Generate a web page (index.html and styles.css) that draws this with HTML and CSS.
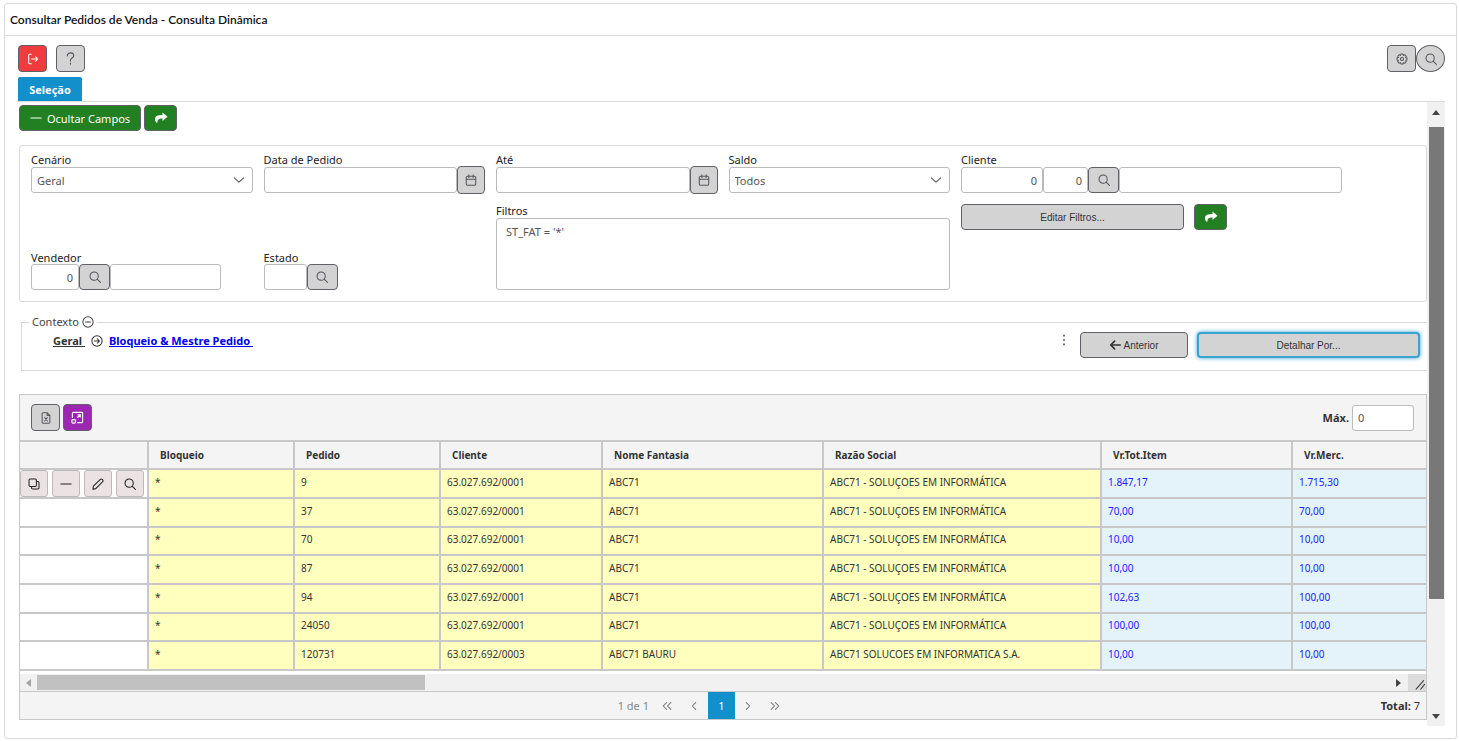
FILE: index.html
```html
<!DOCTYPE html>
<html lang="pt-BR">
<head>
  <meta charset="UTF-8" />
  <meta name="viewport" content="width=device-width, initial-scale=1.0"/>
  <title>Consultar Pedidos de Venda</title>
  <link rel="stylesheet" href="styles.css">
</head>
<body>
  <svg class="sprite" aria-hidden="true">
    <symbol id="i-exit" viewBox="0 0 14 14"><path d="M5 1.500H3a1 1 0 0 0-1 1v9a1 1 0 0 0 1 1h2M5 7h7.500M9.800 4.300 12.500 7 9.800 9.700"/></symbol>
    <symbol id="i-help" viewBox="0 0 14 14"><path d="M3.500 4.200C3.500 2.200 5 1 7 1s3.500 1.200 3.500 3.100C10.500 6.300 7 6.500 7 8.500v1.200M7 12v1"/></symbol>
    <symbol id="i-search" viewBox="0 0 14 14"><circle cx="6" cy="6" r="4.800"/><path d="m9.500 9.500 3.800 3.800"/></symbol>
    <symbol id="i-cog" viewBox="0 0 14 14"><path d="M5.700 1.200h2.600l.4 1.600 1.500-.8 1.800 1.800-.8 1.500 1.600.4v2.600l-1.600.4.8 1.500-1.800 1.800-1.500-.8-.4 1.600H5.700l-.4-1.600-1.500.8L2 10.200l.8-1.500-1.600-.4V5.700l1.600-.4L2 3.800 3.800 2l1.500.8z"/><circle cx="7" cy="7" r="1.800"/></symbol>
    <symbol id="i-minus" viewBox="0 0 14 14"><path d="M1 7h12"/></symbol>
    <symbol id="i-share" viewBox="0 0 14 14"><path class="solid" d="M8.500 1.500 13.500 5.800 8.500 10V7.500C5 7.400 3.200 8.500 3.300 12.300 1.500 11 .8 9.500 1 7.800 1.300 5 4 4 8.500 4z"/></symbol>
    <symbol id="i-calendar" viewBox="0 0 14 14"><rect x="1.500" y="2.500" width="11" height="10.500" rx="1.200"/><path d="M1.500 6h11M4.500 1v3M9.500 1v3"/></symbol>
    <symbol id="i-down" viewBox="0 0 14 14"><path d="m1.500 4.500 5.500 5 5.500-5"/></symbol>
    <symbol id="i-collapse" viewBox="0 0 14 14"><circle cx="7" cy="7" r="6"/><path d="M4 7h6"/></symbol>
    <symbol id="i-circle-right" viewBox="0 0 14 14"><circle cx="7" cy="7" r="6"/><path d="M4 7h6M7.500 4.500 10 7 7.500 9.500"/></symbol>
    <symbol id="i-left" viewBox="0 0 14 14"><path d="M13 7H2M6.500 2.500 2 7l4.500 4.500"/></symbol>
    <symbol id="i-dots" viewBox="0 0 14 14"><path class="solid" d="M6 1h2v2H6zM6 6h2v2H6zM6 11h2v2H6z"/></symbol>
    <symbol id="i-excel" viewBox="0 0 14 14"><path d="M8.500 1H3.500a1 1 0 0 0-1 1v10a1 1 0 0 0 1 1h7a1 1 0 0 0 1-1V4zM8.300 1v3.200h3.200M5.500 6.500l3 4M8.500 6.500l-3 4"/></symbol>
    <symbol id="i-expand" viewBox="0 0 14 14"><path d="M1.500 7V2.500a1 1 0 0 1 1-1h9a1 1 0 0 1 1 1v9a1 1 0 0 1-1 1H7M7 7l3-3M7.500 4H10v2.500"/><rect x="1" y="9.300" width="3.700" height="3.700" rx="1"/></symbol>
    <symbol id="i-clone" viewBox="0 0 14 14"><rect x="1.200" y="1.200" width="8.600" height="8.600" rx="1.200"/><path d="M9.800 4.200h1.800a1.200 1.200 0 0 1 1.200 1.200v6.200a1.200 1.200 0 0 1-1.200 1.200H5.400a1.200 1.200 0 0 1-1.200-1.200V9.800"/></symbol>
    <symbol id="i-pencil" viewBox="0 0 14 14"><path d="m1 13 .6-3.400L9.800 1.500a1.400 1.400 0 0 1 2 0l.7.700a1.400 1.400 0 0 1 0 2L4.400 12.400z"/></symbol>
    <symbol id="i-prev" viewBox="0 0 14 14"><path d="M9 3 5 7l4 4"/></symbol>
    <symbol id="i-next" viewBox="0 0 14 14"><path d="m5 3 4 4-4 4"/></symbol>
    <symbol id="i-first" viewBox="0 0 14 14"><path d="M6.500 3l-4 4 4 4M11.500 3l-4 4 4 4"/></symbol>
    <symbol id="i-last" viewBox="0 0 14 14"><path d="m2.500 3 4 4-4 4M7.500 3l4 4-4 4"/></symbol>
  </svg>

  <main class="window">
    <header class="window-title">
      <h1>Consultar Pedidos de Venda - Consulta Dinâmica</h1>
    </header>

    <div class="window-body">
      <div class="toolbar">
        <button class="btn exit" aria-label="Sair"><svg><use href="#i-exit"/></svg></button>
        <button class="btn help" aria-label="Ajuda"><svg><use href="#i-help"/></svg></button>
        <button class="btn config" aria-label="Configurar"><svg><use href="#i-cog"/></svg></button>
        <button class="btn round" aria-label="Pesquisar"><svg><use href="#i-search"/></svg></button>
      </div>

      <nav class="tabs">
        <button class="tab">Seleção</button>
      </nav>

      <div class="scroll-area">
        <div class="content">
          <div class="actions">
            <button class="btn green hide-fields"><svg><use href="#i-minus"/></svg>Ocultar Campos</button>
            <button class="btn green share" aria-label="Executar"><svg><use href="#i-share"/></svg></button>
          </div>

          <form class="fields" onsubmit="return false">
            <div class="field">
              <label for="cenario">Cenário</label>
              <div class="select">
                <select id="cenario"><option>Geral</option></select>
                <svg><use href="#i-down"/></svg>
              </div>
            </div>
            <div class="field">
              <label for="dataPedido">Data de Pedido</label>
              <div class="group">
                <input class="grow" type="text" id="dataPedido">
                <button class="btn date" aria-label="Calendário"><svg><use href="#i-calendar"/></svg></button>
              </div>
            </div>
            <div class="field">
              <label for="ate">Até</label>
              <div class="group">
                <input class="grow" type="text" id="ate">
                <button class="btn date" aria-label="Calendário"><svg><use href="#i-calendar"/></svg></button>
              </div>
            </div>
            <div class="field">
              <label for="saldo">Saldo</label>
              <div class="select">
                <select id="saldo"><option>Todos</option></select>
                <svg><use href="#i-down"/></svg>
              </div>
            </div>
            <div class="field double">
              <label for="cliente">Cliente</label>
              <div class="group client">
                <input class="number code" type="text" id="cliente" value="0">
                <input class="number branch" type="text" aria-label="Filial" value="0">
                <button class="btn lookup" aria-label="Buscar cliente"><svg><use href="#i-search"/></svg></button>
                <input class="grow" type="text" aria-label="Nome do cliente">
              </div>
            </div>

            <div class="field">
              <label for="vendedor">Vendedor</label>
              <div class="group seller">
                <input class="number short" type="text" id="vendedor" value="0">
                <button class="btn lookup" aria-label="Buscar vendedor"><svg><use href="#i-search"/></svg></button>
                <input class="grow" type="text" aria-label="Nome do vendedor">
              </div>
            </div>
            <div class="field">
              <label for="estado">Estado</label>
              <div class="group">
                <input class="state" type="text" id="estado">
                <button class="btn lookup" aria-label="Buscar estado"><svg><use href="#i-search"/></svg></button>
              </div>
            </div>
            <div class="field double">
              <label for="filtros">Filtros</label>
              <textarea id="filtros">ST_FAT = '*'</textarea>
            </div>
            <div class="filter-actions double">
              <button class="btn wide">Editar Filtros...</button>
              <button class="btn green share" aria-label="Aplicar"><svg><use href="#i-share"/></svg></button>
            </div>
          </form>

          <fieldset class="context">
            <legend>Contexto <svg><use href="#i-collapse"/></svg></legend>
            <div class="context-row">
              <div class="crumbs">
                <a class="crumb" href="#">Geral&nbsp;</a>
                <svg><use href="#i-circle-right"/></svg>
                <a class="crumb current" href="#">Bloqueio &amp; Mestre Pedido&nbsp;</a>
              </div>
              <button class="menu" aria-label="Mais opções"><svg><use href="#i-dots"/></svg></button>
              <button class="btn back"><svg><use href="#i-left"/></svg>Anterior</button>
              <button class="btn wide focused">Detalhar Por...</button>
            </div>
          </fieldset>

          <section class="grid">
            <div class="grid-tools">
              <button class="btn file" aria-label="Exportar"><svg><use href="#i-excel"/></svg></button>
              <button class="btn purple" aria-label="Expandir"><svg><use href="#i-expand"/></svg></button>
              <label for="max">Máx.</label>
              <input type="text" id="max" value="0">
            </div>

            <table>
              <colgroup>
                <col class="c-tools"><col class="c-block"><col class="c-order"><col class="c-client">
                <col class="c-name"><col class="c-company"><col class="c-total"><col>
              </colgroup>
              <thead>
                <tr>
                  <th></th><th>Bloqueio</th><th>Pedido</th><th>Cliente</th><th>Nome Fantasia</th>
                  <th>Razão Social</th><th>Vr.Tot.Item</th><th>Vr.Merc.</th>
                </tr>
              </thead>
              <tbody>
                <tr>
                  <td class="row-tools">
                    <div>
                      <button aria-label="Copiar"><svg><use href="#i-clone"/></svg></button>
                      <button aria-label="Remover"><svg><use href="#i-minus"/></svg></button>
                      <button aria-label="Editar"><svg><use href="#i-pencil"/></svg></button>
                      <button aria-label="Consultar"><svg><use href="#i-search"/></svg></button>
                    </div>
                  </td>
                  <td>*</td><td>9</td><td>63.027.692/0001</td><td>ABC71</td><td>ABC71 - SOLUÇOES EM INFORMÁTICA</td>
                  <td class="value">1.847,17</td><td class="value">1.715,30</td>
                </tr>
                <tr>
                  <td class="row-tools"></td><td>*</td><td>37</td><td>63.027.692/0001</td><td>ABC71</td><td>ABC71 - SOLUÇOES EM INFORMÁTICA</td>
                  <td class="value">70,00</td><td class="value">70,00</td>
                </tr>
                <tr>
                  <td class="row-tools"></td><td>*</td><td>70</td><td>63.027.692/0001</td><td>ABC71</td><td>ABC71 - SOLUÇOES EM INFORMÁTICA</td>
                  <td class="value">10,00</td><td class="value">10,00</td>
                </tr>
                <tr>
                  <td class="row-tools"></td><td>*</td><td>87</td><td>63.027.692/0001</td><td>ABC71</td><td>ABC71 - SOLUÇOES EM INFORMÁTICA</td>
                  <td class="value">10,00</td><td class="value">10,00</td>
                </tr>
                <tr>
                  <td class="row-tools"></td><td>*</td><td>94</td><td>63.027.692/0001</td><td>ABC71</td><td>ABC71 - SOLUÇOES EM INFORMÁTICA</td>
                  <td class="value">102,63</td><td class="value">100,00</td>
                </tr>
                <tr>
                  <td class="row-tools"></td><td>*</td><td>24050</td><td>63.027.692/0001</td><td>ABC71</td><td>ABC71 - SOLUÇOES EM INFORMÁTICA</td>
                  <td class="value">100,00</td><td class="value">100,00</td>
                </tr>
                <tr>
                  <td class="row-tools"></td><td>*</td><td>120731</td><td>63.027.692/0003</td><td>ABC71 BAURU</td><td>ABC71 SOLUCOES EM INFORMATICA S.A.</td>
                  <td class="value">10,00</td><td class="value">10,00</td>
                </tr>
              </tbody>
            </table>

            <div class="hscroll">
              <span class="arrow left"></span>
              <div class="track"><div class="thumb"></div></div>
              <span class="arrow right"></span>
              <svg class="resizer" viewBox="0 0 18 18"><path d="M8 16l8-9M13 16l4-5"/></svg>
            </div>

            <footer class="pager">
              <div class="pages">
                <span>1 de 1</span>
                <button aria-label="Primeira"><svg><use href="#i-first"/></svg></button>
                <button aria-label="Anterior"><svg><use href="#i-prev"/></svg></button>
                <button class="active">1</button>
                <button aria-label="Próxima"><svg><use href="#i-next"/></svg></button>
                <button aria-label="Última"><svg><use href="#i-last"/></svg></button>
              </div>
              <div class="total"><b>Total:</b> 7</div>
            </footer>
          </section>
        </div>

        <div class="vscroll">
          <span class="arrow up"></span>
          <div class="track"><div class="thumb"></div></div>
          <span class="arrow down"></span>
        </div>
      </div>
    </div>
  </main>
</body>
</html>
```
FILE: styles.css
```css
* {
  box-sizing: border-box;
}
body {
  margin: 0;
  padding: 3px 2px 2px 4px;
  background: white;
  color: #333;
  font-family: "Noto Sans", sans-serif;
  font-size: 11px;
  line-height: 14px;
}
button, input, select, textarea {
  font-family: inherit;
  font-size: 11px;
  color: #555;
  margin: 0;
}
svg {
  width: 12px;
  height: 12px;
  flex: none;
  fill: none;
  stroke: currentColor;
  stroke-width: 1.2;
  stroke-linecap: round;
  stroke-linejoin: round;
}
.solid {
  fill: currentColor;
  stroke: none;
}
.sprite {
  display: none;
}
.window {
  border: 1px solid #d9d9d9;
  border-radius: 3px;
}
.window-title {
  height: 32px;
  padding: 0 5px;
  display: flex;
  align-items: center;
  border-bottom: 1px solid #d9d9d9;
}
h1 {
  margin: 0;
  font-family: Lato, sans-serif;
  font-size: 12px;
  font-weight: 600;
  color: #111;
}
.window-body {
  padding: 9px 11px 12px 12px;
}

/* buttons */
.btn {
  height: 26px;
  padding: 0;
  display: flex;
  align-items: center;
  justify-content: center;
  flex: none;
  background: #d3d3d3;
  color: #55555c;
  border: 1px solid #606066;
  border-radius: 4px;
}
.green {
  background: #228022;
  color: white;
}
.exit, .help, .config, .round, .file, .purple {
  width: 29px;
  height: 27px;
}
.exit {
  background: #f03c3c;
  color: white;
  margin-right: 9px;
}
.help svg {
  width: 13px;
  height: 13px;
}
.config {
  margin-left: auto;
}
.round {
  border-radius: 50%;
}
.purple {
  background: #9c27b0;
  color: white;
}
.purple svg {
  width: 13px;
  height: 13px;
}
.hide-fields {
  width: 122px;
  gap: 5px;
}
.share {
  width: 33px;
}
.share svg {
  width: 14px;
  height: 14px;
}
.date {
  width: 28px;
  height: 28px;
}
.lookup {
  width: 31px;
}
.wide, .back {
  font-family: "Liberation Sans", sans-serif;
  font-size: 10px;
  color: #333;
}
.wide {
  width: 223px;
}
.back {
  width: 108px;
  gap: 2px;
}
.back svg {
  stroke-width: 2;
}
.focused {
  border: 2px solid #3ba3d0;
  box-shadow: 0 0 4px #3ba3d0;
}

.toolbar {
  display: flex;
  padding-left: 1px;
}
.tabs {
  padding: 5px 1px 0;
  border-bottom: 1px solid #d9d9d9;
}
.tab {
  display: block;
  width: 64px;
  height: 24px;
  padding: 0;
  border: none;
  border-radius: 2px 2px 0 0;
  background: #1190cb;
  color: white;
  font-weight: bold;
}
.scroll-area {
  display: flex;
}
.content {
  flex: 1;
  min-width: 0;
  padding: 3px 0 6px 2px;
}
.actions {
  display: flex;
  gap: 3px;
}

/* search fields */
.fields {
  display: grid;
  grid-template-columns: repeat(6, 1fr);
  row-gap: 10px;
  margin-top: 14px;
  padding: 7px 0 11px 11px;
  border: 1px solid #d9d9d9;
  border-radius: 3px;
}
.double {
  grid-column: span 2;
}
.field {
  display: flex;
  flex-direction: column;
  justify-content: flex-end;
  padding-right: 11px;
}
.field label {
  line-height: 13px;
  color: #222;
}
.fields input, select, textarea, #max {
  height: 26px;
  min-width: 0;
  padding: 0 5px;
  border: 1px solid #bbb;
  border-radius: 3px;
  background: white;
}
.group {
  display: flex;
  align-items: center;
}
.group .grow {
  flex: 1;
}
.number {
  text-align: right;
}
.client {
  width: 381px;
  height: 28px;
}
.seller {
  width: 190px;
}
.code {
  width: 82px;
}
.branch {
  width: 45px;
}
.short {
  width: 48px;
}
.state {
  width: 43px;
}
.select {
  display: grid;
  align-items: center;
  height: 28px;
}
.select select {
  grid-area: 1 / 1;
  width: 100%;
  appearance: none;
}
.select svg {
  grid-area: 1 / 1;
  justify-self: end;
  margin-right: 8px;
  color: #555;
  pointer-events: none;
}
textarea {
  display: block;
  height: 72px;
  margin-top: 1px;
  padding: 5px 9px;
  resize: none;
}
.filter-actions {
  display: flex;
  gap: 10px;
}

/* context */
.context {
  margin: 13px 0 0 2px;
  padding: 0 7px 12px 31px;
  border: 1px solid #d9d9d9;
  border-right: none;
  min-width: 0;
}
legend {
  display: flex;
  align-items: center;
  gap: 3px;
  margin-left: -24px;
  padding: 0 3px;
  color: #444;
}
.context-row {
  display: flex;
  padding-top: 3px;
}
.crumbs {
  display: flex;
  align-items: center;
  gap: 6px;
  height: 18px;
  margin-right: auto;
}
.crumb {
  color: #333;
  font-weight: bold;
}
.current {
  color: #0000ee;
}
.menu {
  width: 16px;
  height: 18px;
  margin-right: 8px;
  padding: 0;
  border: none;
  background: none;
}
.back {
  margin-right: 9px;
}

/* results */
.grid {
  margin-top: 23px;
  border: 1px solid #c8c8c8;
}
.grid-tools {
  display: flex;
  align-items: center;
  gap: 3px;
  height: 45px;
  padding: 0 12px 0 11px;
  background: #f4f4f4;
}
.grid-tools label {
  margin-left: auto;
  font-weight: bold;
}
#max {
  width: 62px;
}
table {
  width: 100%;
  table-layout: fixed;
  border-collapse: collapse;
}
.c-tools {
  width: 128px;
}
.c-block, .c-order {
  width: 146px;
}
.c-client {
  width: 162px;
}
.c-name {
  width: 221px;
}
.c-company {
  width: 278px;
}
.c-total {
  width: 191px;
}
th, td {
  border: 2px solid #c8c8c8;
  border-left-width: 0;
  text-align: left;
  overflow: hidden;
  white-space: nowrap;
}
tr > :last-child {
  border-right: none;
}
th {
  height: 28px;
  padding: 0 11px;
  background: #f4f4f4;
  font-size: 10px;
}
td {
  height: 29px;
  padding: 0 6px 4px;
  background: #ffffbe;
  font-size: 10px;
}
tr:nth-child(3n) td {
  height: 28px;
}
.value {
  background: #e4f2fa;
  color: #2222ff;
}
.row-tools {
  padding: 0;
  background: white;
}
.row-tools div {
  display: flex;
  gap: 4px;
}
.row-tools button {
  display: flex;
  align-items: center;
  justify-content: center;
  width: 28px;
  height: 27px;
  padding: 0;
  background: #ebe3e3;
  color: #222;
  border: 1px solid #bbb;
  border-radius: 3px;
}

/* scrollbars */
.hscroll {
  display: flex;
  align-items: center;
  height: 17px;
  margin-top: 3px;
  padding-left: 6px;
  background: #f1f1f1;
}
.track {
  flex: 1;
}
.hscroll .track {
  padding: 0 4px 0 6px;
}
.hscroll .thumb {
  width: 388px;
  height: 15px;
  background: #c1c1c1;
}
.arrow {
  border: 4px solid transparent;
}
.arrow.left {
  border-left: none;
  border-right: 5px solid #a3a3a3;
}
.arrow.right {
  border-right: none;
  border-left: 5px solid #444;
  margin-right: 7px;
}
.arrow.up {
  border-top: none;
  border-bottom: 5px solid #444;
}
.arrow.down {
  border-bottom: none;
  border-top: 5px solid #444;
}
.resizer {
  width: 18px;
  height: 17px;
  background: #dcdcdc;
  color: #444;
}
.vscroll {
  display: flex;
  flex-direction: column;
  align-items: center;
  width: 18px;
  padding: 8px 0 7px;
  background: #f1f1f1;
}
.vscroll .track {
  padding: 12px 0;
}
.vscroll .thumb {
  width: 15px;
  height: 82%;
  background: #787878;
}

.pager {
  display: flex;
  align-items: center;
  height: 28px;
  padding: 0 6px;
  background: #f4f4f4;
  border-top: 1px solid #c8c8c8;
}
.pages {
  display: flex;
  align-items: center;
  margin: 0 auto;
  color: #888;
}
.pages span {
  margin-right: 5px;
}
.pages button {
  display: flex;
  align-items: center;
  justify-content: center;
  width: 27px;
  height: 27px;
  padding: 0;
  border: none;
  background: none;
  color: #777;
}
.pages .active {
  background: #1190cb;
  color: white;
}
```
